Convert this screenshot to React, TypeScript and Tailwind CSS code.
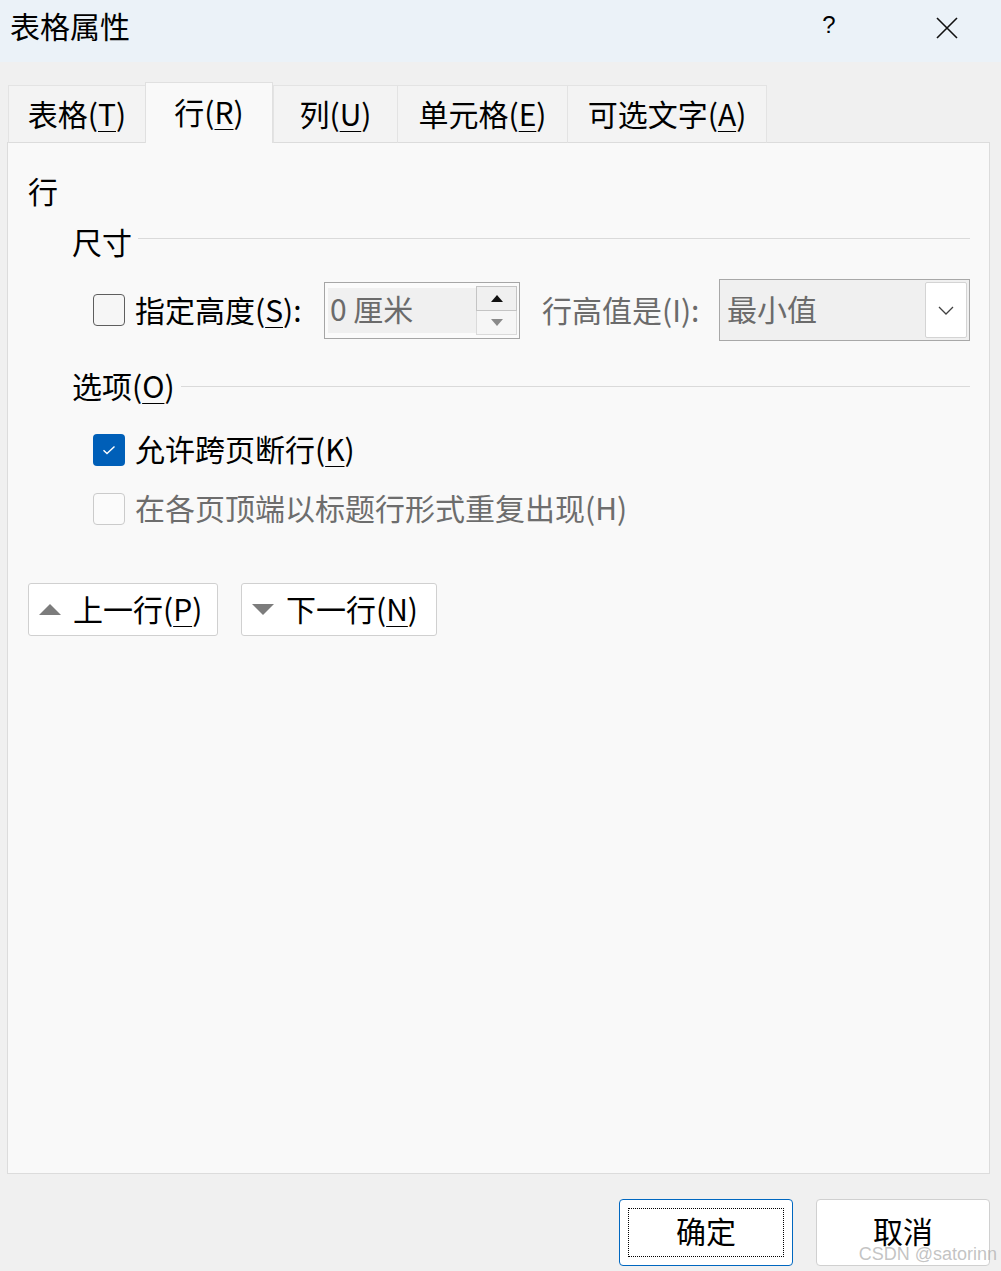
import React from 'react';

const font = "font-['Noto_Sans_CJK_SC','Microsoft_YaHei',sans-serif]";

interface TabDef {
  label: string;
  key: string;
  width: string;
  active?: boolean;
}

const tabs: TabDef[] = [
  { label: '表格', key: 'T', width: 'w-[137px]' },
  { label: '行', key: 'R', width: 'w-[128px]', active: true },
  { label: '列', key: 'U', width: 'w-[124px]' },
  { label: '单元格', key: 'E', width: 'w-[170px]' },
  { label: '可选文字', key: 'A', width: 'w-[200px]' },
];

function Mnemonic({ text, k, suffix = '' }: { text: string; k: string; suffix?: string }) {
  return (
    <span>
      {text}(<span className="underline decoration-1 underline-offset-[5px]">{k}</span>){suffix}
    </span>
  );
}

function Checkbox({ state }: { state: 'off' | 'on' | 'disabled' }) {
  if (state === 'on') {
    return (
      <div className="w-[32px] h-[32px] rounded-[4px] bg-[#005fb8] flex items-center justify-center shrink-0">
        <svg width="16" height="12" viewBox="0 0 16 12">
          <path d="M2.5 6.2 L6 9.6 L13.5 2.4" fill="none" stroke="#ffffff" strokeWidth="1.4" />
        </svg>
      </div>
    );
  }
  return (
    <div
      className={
        state === 'off'
          ? 'w-[32px] h-[32px] rounded-[4px] border-[1.5px] border-[#5e5e5e] bg-[#f6f6f6] shrink-0'
          : 'w-[32px] h-[32px] rounded-[4px] border-[1.5px] border-[#cbcbcb] bg-[#fbfbfb] shrink-0'
      }
    />
  );
}

function SectionHeader({ children, lineGap }: { children: React.ReactNode; lineGap: string }) {
  return (
    <div className="flex items-center h-[40px] ml-[44px]">
      <div className="text-[30px] leading-[40px] text-black pb-[5px]">{children}</div>
      <div className={`flex-1 h-px bg-[#dadada] ml-[6px] ${lineGap}`} />
    </div>
  );
}

export default function App() {
  return (
    <div className={`w-[1001px] h-[1271px] bg-[#f0f0f0] flex flex-col relative overflow-hidden ${font}`}>
      {/* title bar */}
      <div className="h-[62px] bg-[#ebf2f8] flex items-center shrink-0 pb-[12px]">
        <div className="pl-[10px] text-[30px] leading-[40px] text-black">表格属性</div>
        <div className="flex-1" />
        <div className="w-[20px] text-center text-[24px] leading-[30px] text-black font-['Liberation_Sans',sans-serif] mr-[97px]">
          ?
        </div>
        <svg width="22" height="22" viewBox="0 0 22 22" className="mr-[43px] mt-[6px]">
          <path d="M1 1 L21 21 M21 1 L1 21" stroke="#111111" strokeWidth="1.6" />
        </svg>
      </div>

      {/* tabs */}
      <div className="flex items-end h-[61px] mt-[20px] ml-[8px] relative z-10">
        {tabs.map((t, i) => (
          <div
            key={t.key}
            className={
              t.active
                ? `${t.width} h-[61px] bg-[#f9f9f9] border-t border-l border-r border-[#e0e0e0] flex items-center justify-center text-[30px] leading-[40px] text-black pb-[4px]`
                : `${t.width} h-[58px] bg-[#f3f3f3] border-t border-l border-[#e3e3e3] ${
                    i === tabs.length - 1 ? 'border-r' : ''
                  } border-b border-b-[#dcdcdc] flex items-center justify-center text-[30px] leading-[40px] text-black pb-[2px]`
            }
          >
            <Mnemonic text={t.label} k={t.key} />
          </div>
        ))}
      </div>

      {/* panel */}
      <div className="ml-[7px] w-[983px] h-[1032px] -mt-px bg-[#f9f9f9] border border-[#dcdcdc] pl-[20px] pr-[19px] flex flex-col">
        <div className="mt-[27px] h-[40px] text-[30px] leading-[40px] text-black">行</div>

        <div className="mt-[13px]">
          <SectionHeader lineGap="mb-[9px]">尺寸</SectionHeader>
        </div>

        {/* size row */}
        <div className="mt-[16px] h-[62px] flex items-center">
          <div className="ml-[65px]">
            <Checkbox state="off" />
          </div>
          <div className="ml-[10px] w-[189px] text-[30px] leading-[40px] text-black whitespace-nowrap pb-[3px]">
            <Mnemonic text="指定高度" k="S" suffix=":" />
          </div>
          <div className="w-[196px] h-[57px] border border-[#a6a6a6] bg-[#fbfbfb] pl-[3px] pr-[2px] py-[3px] flex">
            <div className="flex-1 my-[2px] bg-[#f0f0f0] flex items-center pl-[2px] pb-[4px] text-[30px] leading-[40px] text-[#6b6b6b]">
              0 厘米
            </div>
            <div className="w-[41px] flex flex-col">
              <div className="h-[25px] bg-[#f0f0f0] border border-[#c4c4c4] flex items-center justify-center">
                <svg width="12" height="7" viewBox="0 0 12 7">
                  <path d="M0 7 L6 0 L12 7 Z" fill="#111111" />
                </svg>
              </div>
              <div className="h-[24px] bg-[#f6f6f6] border border-t-0 border-[#dadada] flex items-center justify-center">
                <svg width="12" height="7" viewBox="0 0 12 7">
                  <path d="M0 0 L12 0 L6 7 Z" fill="#8a8a8a" />
                </svg>
              </div>
            </div>
          </div>
          <div className="ml-[22px] w-[177px] text-[30px] leading-[40px] text-[#6b6b6b] whitespace-nowrap pb-[3px]">
            行高值是(I):
          </div>
          <div className="w-[251px] h-[62px] border border-[#a8a8a8] bg-[#f0f0f0] flex items-center pl-[7px] pr-[2px] py-[2px]">
            <div className="flex-1 text-[30px] leading-[40px] text-[#6b6b6b] pb-[5px]">最小值</div>
            <div className="w-[42px] h-[56px] bg-white border border-[#d4d4d4] rounded-[2px] flex items-center justify-center">
              <svg width="16" height="9" viewBox="0 0 16 9">
                <path d="M1 1 L8 8 L15 1" fill="none" stroke="#404040" strokeWidth="1.3" />
              </svg>
            </div>
          </div>
        </div>

        <div className="mt-[26px]">
          <SectionHeader lineGap="mb-[2px]">
            <Mnemonic text="选项" k="O" />
          </SectionHeader>
        </div>

        <div className="mt-[23px] h-[40px] flex items-center">
          <div className="ml-[65px]">
            <Checkbox state="on" />
          </div>
          <div className="ml-[10px] text-[30px] leading-[40px] text-black whitespace-nowrap pb-[4px]">
            <Mnemonic text="允许跨页断行" k="K" />
          </div>
        </div>

        <div className="mt-[19px] h-[40px] flex items-center">
          <div className="ml-[65px]">
            <Checkbox state="disabled" />
          </div>
          <div className="ml-[10px] text-[30px] leading-[40px] text-[#6d6d6d] whitespace-nowrap pb-[4px]">
            在各页顶端以标题行形式重复出现(H)
          </div>
        </div>

        {/* prev / next row buttons */}
        <div className="mt-[54px] flex gap-[23px]">
          <div className="w-[190px] h-[53px] bg-white border border-[#d0d0d0] rounded-[3px] flex items-center">
            <svg width="22" height="11" viewBox="0 0 22 11" className="ml-[10px]">
              <path d="M0 11 L11 0 L22 11 Z" fill="#7c7c7c" />
            </svg>
            <div className="ml-[12px] text-[30px] leading-[40px] text-black whitespace-nowrap pb-[4px]">
              <Mnemonic text="上一行" k="P" />
            </div>
          </div>
          <div className="w-[196px] h-[53px] bg-white border border-[#d0d0d0] rounded-[3px] flex items-center">
            <svg width="22" height="11" viewBox="0 0 22 11" className="ml-[10px]">
              <path d="M0 0 L22 0 L11 11 Z" fill="#7c7c7c" />
            </svg>
            <div className="ml-[12px] text-[30px] leading-[40px] text-black whitespace-nowrap pb-[4px]">
              <Mnemonic text="下一行" k="N" />
            </div>
          </div>
        </div>
      </div>

      {/* footer */}
      <div className="flex justify-end gap-[23px] pt-[25px] pr-[11px]">
        <div className="w-[174px] h-[67px] bg-white border border-[#0067c0] rounded-[4px] p-[8px]">
          <div className="w-full h-full border border-dotted border-black flex items-center justify-center text-[30px] leading-[40px] text-black pb-[5px]">
            确定
          </div>
        </div>
        <div className="w-[174px] h-[67px] bg-white border border-[#d0d0d0] rounded-[4px] flex items-center justify-center text-[30px] leading-[40px] text-black pb-[5px]">
          取消
        </div>
      </div>

      {/* watermark */}
      <div className="absolute right-[4px] bottom-[7px] text-[18px] leading-[20px] text-[#b4b4b4]/80 font-['Liberation_Sans',sans-serif]">
        CSDN @satorinn
      </div>
    </div>
  );
}
